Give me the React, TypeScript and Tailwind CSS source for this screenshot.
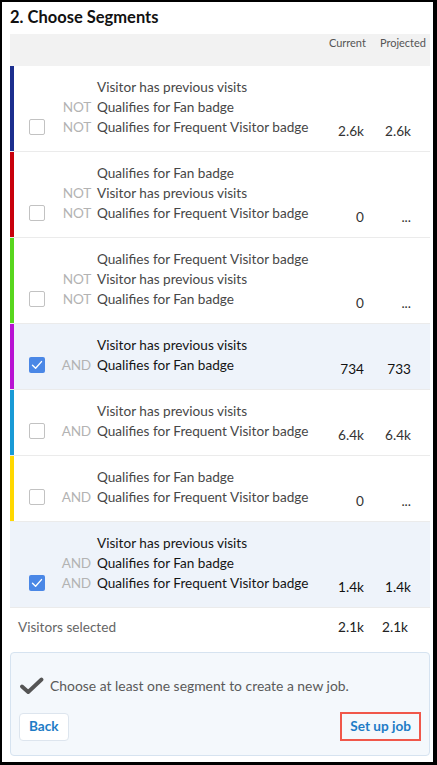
import React from "react";

type Line = [string | null, string];
type Seg = { color: string | null; checked: boolean; lines: Line[]; cur: string; proj: string };

const segs: Seg[] = [
  { color: "#1c2e8e", checked: false, lines: [[null, "Visitor has previous visits"], ["NOT", "Qualifies for Fan badge"], ["NOT", "Qualifies for Frequent Visitor badge"]], cur: "2.6k", proj: "2.6k" },
  { color: "#c8000c", checked: false, lines: [[null, "Qualifies for Fan badge"], ["NOT", "Visitor has previous visits"], ["NOT", "Qualifies for Frequent Visitor badge"]], cur: "0", proj: "..." },
  { color: "#58d61e", checked: false, lines: [[null, "Qualifies for Frequent Visitor badge"], ["NOT", "Visitor has previous visits"], ["NOT", "Qualifies for Fan badge"]], cur: "0", proj: "..." },
  { color: "#b812d2", checked: true, lines: [[null, "Visitor has previous visits"], ["AND", "Qualifies for Fan badge"]], cur: "734", proj: "733" },
  { color: "#199ad6", checked: false, lines: [[null, "Visitor has previous visits"], ["AND", "Qualifies for Frequent Visitor badge"]], cur: "6.4k", proj: "6.4k" },
  { color: "#ffd800", checked: false, lines: [[null, "Qualifies for Fan badge"], ["AND", "Qualifies for Frequent Visitor badge"]], cur: "0", proj: "..." },
  { color: null, checked: true, lines: [[null, "Visitor has previous visits"], ["AND", "Qualifies for Fan badge"], ["AND", "Qualifies for Frequent Visitor badge"]], cur: "1.4k", proj: "1.4k" },
];

function Checkbox({ checked }: { checked: boolean }) {
  if (checked) {
    return (
      <div className="w-[16px] h-[16px] rounded-[2px] bg-[#4a87e6] flex items-center justify-center">
        <svg width="12" height="10" viewBox="0 0 12 10" fill="none">
          <path d="M1.5 5.2 L4.6 8.2 L10.5 1.6" stroke="#ffffff" strokeWidth="1.4" strokeLinecap="round" strokeLinejoin="round" />
        </svg>
      </div>
    );
  }
  return <div className="w-[16px] h-[16px] rounded-[2px] bg-white border-[1.5px] border-[#c2c2c2]" />;
}

function Row({ s }: { s: Seg }) {
  const txt = s.checked ? "text-[#151515]" : "text-[#474747]";
  return (
    <div className={`flex border-b border-[#ebebeb] ${s.checked ? "bg-[#eef3fa]" : "bg-white"}`}>
      <div className="w-[4px] shrink-0" style={{ backgroundColor: s.color ?? "transparent" }} />
      <div className="flex flex-1 items-end pt-[11px] pb-[10px]">
        <div className="ml-[15px] mb-[6px] shrink-0">
          <Checkbox checked={s.checked} />
        </div>
        <div className="flex flex-col mb-[4px] flex-1">
          {s.lines.map(([lab, t], i) => (
            <div key={i} className="flex h-[20px] items-center">
              <div className="w-[46px] text-right text-[#b3b3b3] text-[13.6px] tracking-[-0.2px]">{lab ?? ""}</div>
              <div className={`ml-[6px] text-[13.6px] ${txt}`}>{t}</div>
            </div>
          ))}
        </div>
        <div className={`w-[44px] text-right text-[13.6px] leading-[20px] ${s.checked ? "text-[#111]" : "text-[#333]"}`}>{s.cur}</div>
        <div className={`w-[47px] text-right text-[13.6px] leading-[20px] mr-[19px] ${s.checked ? "text-[#111]" : "text-[#333]"}`}>{s.proj}</div>
      </div>
    </div>
  );
}

export default function App() {
  return (
    <div className="w-[437px] h-[765px] bg-black pt-[2px] pl-[2px] pr-[4px] pb-[3px]" style={{ fontFamily: "Lato, 'Noto Sans', sans-serif" }}>
      <div className="bg-white h-full pl-[8px] pr-[3px] flex flex-col">
        <div className="pt-[5px] h-[32px] text-[16.5px] leading-[20px] font-bold text-[#111]">2. Choose Segments</div>
        <div className="h-[32px] bg-[#f2f2f2] flex justify-end pt-[2px] pr-[4px] text-[11px] leading-[14px] text-[#555]">
          <span>Current</span>
          <span className="ml-[14px]">Projected</span>
        </div>
        {segs.map((s, i) => (
          <Row key={i} s={s} />
        ))}
        <div className="flex items-center h-[38px] pl-[8px] text-[13.6px]">
          <div className="flex-1 text-[#666]">Visitors selected</div>
          <div className="w-[44px] text-right text-[#222]">2.1k</div>
          <div className="w-[44px] text-right mr-[22px] text-[#222]">2.1k</div>
        </div>
        <div className="mt-[6px] h-[104px] bg-[#f4f8fc] border border-[#d6e3f0] rounded-[4px] pt-[23px] px-[8px]">
          <div className="flex items-center h-[20px]">
            <svg width="24" height="18" viewBox="0 0 24 18" fill="none" className="ml-[1px]">
              <path d="M2 9.5 L8.2 15 L21.5 2.5" stroke="#555555" strokeWidth="3.8" strokeLinecap="round" strokeLinejoin="round" />
            </svg>
            <span className="ml-[6px] text-[13.9px] text-[#5a5a5a]">Choose at least one segment to create a new job.</span>
          </div>
          <div className="flex justify-between items-center mt-[16px]">
            <button className="h-[28px] px-[9px] bg-white border border-[#dde5ee] rounded-[4px] text-[13.6px] font-bold text-[#1d7cc6]">Back</button>
            <button className="h-[29px] px-[8px] bg-transparent border-[2.5px] border-[#f0574a] text-[13.6px] font-bold text-[#1d7cc6]">Set up job</button>
          </div>
        </div>
      </div>
    </div>
  );
}
